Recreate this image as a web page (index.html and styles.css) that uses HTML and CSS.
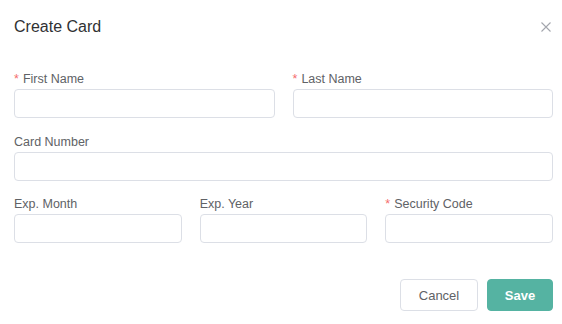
FILE: index.html
```html
<!DOCTYPE html>
<html lang="en">
<head>
  <meta charset="UTF-8">
  <meta name="viewport" content="width=device-width, initial-scale=1.0">
  <title>Create Card</title>
  <link rel="stylesheet" href="styles.css">
</head>
<body>
  <div class="dialog">
    <div class="dialog-header">
      <span class="dialog-title">Create Card</span>
      <button class="close-button" aria-label="Close">
        <svg width="10" height="10" viewBox="0 0 10 10">
          <path d="M0.5 0.5 L9.5 9.5 M9.5 0.5 L0.5 9.5" stroke="#a3a6ad" stroke-width="1.1" fill="none"/>
        </svg>
      </button>
    </div>

    <form class="card-form">
      <div class="form-row two-cols">
        <div class="form-item">
          <label class="form-label required">First Name</label>
          <input class="form-input" type="text">
        </div>
        <div class="form-item">
          <label class="form-label required">Last Name</label>
          <input class="form-input" type="text">
        </div>
      </div>

      <div class="form-row">
        <div class="form-item">
          <label class="form-label">Card Number</label>
          <input class="form-input" type="text">
        </div>
      </div>

      <div class="form-row three-cols">
        <div class="form-item">
          <label class="form-label">Exp. Month</label>
          <input class="form-input" type="text">
        </div>
        <div class="form-item">
          <label class="form-label">Exp. Year</label>
          <input class="form-input" type="text">
        </div>
        <div class="form-item">
          <label class="form-label required">Security Code</label>
          <input class="form-input" type="text">
        </div>
      </div>
    </form>

    <div class="dialog-footer">
      <button class="btn btn-cancel">Cancel</button>
      <button class="btn btn-save">Save</button>
    </div>
  </div>
</body>
</html>
```

FILE: styles.css
```css
body {
  margin: 0;
  background: #fff;
  font-family: "Liberation Sans", Arial, sans-serif;
  color: #303133;
}

.dialog {
  padding: 0 9px 0 14px;
}

.dialog-header {
  display: flex;
  justify-content: space-between;
  align-items: center;
  padding-top: 15px;
  height: 24px;
}

.dialog-title {
  font-size: 16px;
  line-height: 24px;
  color: #303133;
}

.close-button {
  border: none;
  background: none;
  padding: 0;
  margin-right: 2px;
  width: 10px;
  height: 10px;
  display: flex;
  cursor: pointer;
}

.card-form {
  padding-top: 32px;
}

.form-row {
  display: grid;
  grid-template-columns: 1fr;
  column-gap: 18px;
}

.two-cols {
  grid-template-columns: 1fr 1fr;
  margin-bottom: 1px;
}

.three-cols {
  grid-template-columns: 1fr 1fr 1fr;
}

.form-item {
  display: flex;
  flex-direction: column;
  margin-bottom: 15px;
}

.form-label {
  font-size: 12.5px;
  line-height: 16px;
  color: #606266;
  margin-bottom: 2px;
}

.form-label.required::before {
  content: "*";
  color: #f56c6c;
  margin-right: 4px;
}

.form-input {
  box-sizing: border-box;
  height: 29px;
  width: 100%;
  border: 1px solid #dcdfe6;
  border-radius: 4px;
  background: #fff;
  padding: 0 10px;
  font-family: inherit;
  font-size: 13px;
  outline: none;
}

.dialog-footer {
  display: flex;
  justify-content: flex-end;
  gap: 9px;
  padding-top: 21px;
}

.btn {
  box-sizing: border-box;
  height: 32px;
  border-radius: 4px;
  font-family: inherit;
  font-size: 13px;
  cursor: pointer;
}

.btn-cancel {
  width: 78px;
  background: #fff;
  border: 1px solid #dcdfe6;
  color: #606266;
}

.btn-save {
  width: 66px;
  background: #55b3a2;
  border: 1px solid #55b3a2;
  color: #fff;
  font-weight: bold;
}
```
